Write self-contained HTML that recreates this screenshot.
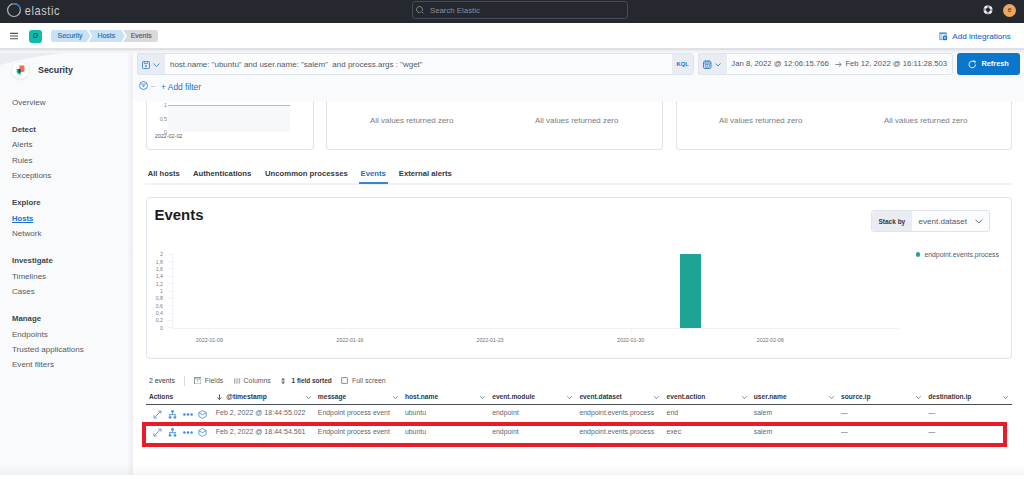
<!DOCTYPE html>
<html><head><meta charset="utf-8">
<style>
*{margin:0;padding:0;box-sizing:border-box}
html,body{width:1024px;height:479px;overflow:hidden;background:#fff;font-family:"Liberation Sans",sans-serif;color:#343741}
.a{position:absolute;white-space:nowrap}
.t{position:absolute;white-space:nowrap;line-height:12px;height:12px}
</style></head><body>
<div class="a" style="left:0px;top:0px;width:1024px;height:23px;background:#25282f"></div>
<svg class="a" style="left:6px;top:3px" width="16" height="16" viewBox="0 0 16 16">
  <circle cx="8" cy="7.1" r="6.4" fill="none" stroke="#b4b7bd" stroke-width="1.2"/>
  <path d="M6.34 0.92 A6.4 6.4 0 0 1 14.38 6.54" fill="none" stroke="#1f78c8" stroke-width="1.3"/>
</svg>
<div class="t" style="left:24.8px;top:4px;font-size:11px;line-height:14px;height:14px;letter-spacing:0.57px;color:#c9cbd0;transform:scaleY(1.22);transform-origin:0 11.1px">elastic</div>
<div class="a" style="left:412px;top:1px;width:216px;height:17.6px;border:1px solid #484c56;border-radius:3px;background:#25282f"></div>
<svg class="a" style="left:416px;top:6px" width="8" height="8" viewBox="0 0 8 8"><path d="M6.2 4.8 A3 3 0 1 0 4.8 6.2" fill="none" stroke="#8e9199" stroke-width="0.9"/><path d="M5.4 5.4 L7.4 7.4" stroke="#8e9199" stroke-width="0.9"/></svg>
<div class="t" style="left:430px;top:4.90px;font-size:7.8px;color:#8d9098;">Search Elastic</div>
<svg class="a" style="left:982px;top:4px" width="12" height="12" viewBox="0 0 12 12"><circle cx="6" cy="5.8" r="3.4" fill="none" stroke="#a7a9af" stroke-width="2.4"/><circle cx="6" cy="5.8" r="3.4" fill="none" stroke="#f2f3f5" stroke-width="2.4" stroke-dasharray="2.4 2.94" stroke-dashoffset="-1.47"/></svg>
<div class="a" style="left:1002.8px;top:3.5px;width:13.4px;height:13.4px;border-radius:50%;background:#f1a45a"></div>
<div class="t" style="left:1003px;top:2.9px;width:13px;font-size:6.6px;line-height:13px;height:13px;text-align:center;color:#3a2e22">e</div>
<div class="a" style="left:0px;top:23px;width:1024px;height:25px;background:#fff"></div>
<div class="a" style="left:0px;top:48px;width:1024px;height:1px;background:#e0e1e6"></div>
<div class="a" style="left:0px;top:49px;width:1024px;height:1px;background:#dfe0e5"></div>
<svg class="a" style="left:9px;top:31px" width="10" height="10" viewBox="0 0 10 10"><path d="M1 2.4 H9 M1 5 H9 M1 7.7 H9" stroke="#4a4f5a" stroke-width="1.1"/></svg>
<div class="a" style="left:29px;top:29.5px;width:13px;height:13px;border-radius:3px;background:#0fbcab"></div>
<div class="t" style="left:29px;top:29.3px;width:13px;font-size:7px;line-height:13px;height:13px;text-align:center;color:#1a1c21">D</div>
<svg class="a" style="left:51px;top:30px" width="108" height="12" viewBox="0 0 108 12">
  <path d="M2 0 H35.5 L39.5 6 L35.5 12 H2 Q0 12 0 10 V2 Q0 0 2 0Z" fill="#c9e1f4"/>
  <path d="M37.5 0 H70 L74 6 L70 12 H37.5 L41.5 6Z" fill="#c9e1f4"/>
  <path d="M72 0 H105 Q107 0 107 2 V10 Q107 12 105 12 H72 L76 6Z" fill="#d9dadd"/>
</svg>
<div class="t" style="left:57.5px;top:29.90px;font-size:6.95px;color:#1f6cb5;-webkit-text-stroke:0.15px #1f6cb5">Security</div>
<div class="t" style="left:97.5px;top:29.90px;font-size:6.95px;color:#1f6cb5;-webkit-text-stroke:0.15px #1f6cb5">Hosts</div>
<div class="t" style="left:130.8px;top:29.90px;font-size:6.85px;color:#535966;-webkit-text-stroke:0.15px #535966">Events</div>
<svg class="a" style="left:938.5px;top:31.5px" width="10" height="10" viewBox="0 0 10 10"><rect x="0.8" y="0.8" width="6.4" height="6.9" fill="#e3eef9" stroke="#4a90da" stroke-width="0.8"/><path d="M0.8 1.6 H7.2" stroke="#4a90da" stroke-width="1"/><path d="M2.5 2.3 V7.7" stroke="#8cb8e6" stroke-width="0.6"/><circle cx="6" cy="5.9" r="2.3" fill="#0f6fcf"/><path d="M6 4.8 V7 M4.9 5.9 H7.1" stroke="#fff" stroke-width="0.7"/></svg>
<div class="t" style="left:952.3px;top:31.10px;font-size:8.1px;color:#1a6fcf;-webkit-text-stroke:0.12px #1a6fcf">Add integrations</div>
<div class="a" style="left:0px;top:50px;width:132px;height:425px;background:#f9fafc"></div>
<div class="a" style="left:127px;top:50px;width:6px;height:425px;background:linear-gradient(to right,rgba(40,50,80,0),rgba(40,50,80,.07))"></div>
<svg class="a" style="left:0;top:50px" width="132" height="30" viewBox="0 0 132 30"><path d="M0 0 H132 Q50 0 0 15Z" fill="#e9ecf2"/></svg>
<div class="a" style="left:12px;top:61.7px;width:17px;height:17px;border-radius:50%;background:#fff;box-shadow:0 0.5px 2px rgba(0,0,0,.16)"></div>
<svg class="a" style="left:16px;top:65px" width="10" height="10" viewBox="0 0 10 10"><path d="M3.4 0.4 H8.4 V5.5 Q8.4 6.4 7.6 6.8 L4.6 7.6 V3.9 H3.4Z" fill="#f86b4f"/><path d="M0.6 3.9 H4.6 V9.9 L2.2 8.9 Q0.6 8.2 0.6 6.8Z" fill="#1fb8a6"/><path d="M2.5 3.9 H4.6 V7.8 L2.5 7.4Z" fill="#2b3a45"/></svg>
<div class="t" style="left:38px;top:63.60px;font-size:8.87px;color:#343741;font-weight:bold;">Security</div>
<div class="t" style="left:12px;top:96.50px;font-size:8.05px;color:#555a64;">Overview</div>
<div class="t" style="left:12px;top:123.60px;font-size:7.8px;color:#41454e;font-weight:bold;">Detect</div>
<div class="t" style="left:12px;top:139.30px;font-size:8.05px;color:#555a64;">Alerts</div>
<div class="t" style="left:12px;top:154.50px;font-size:8.05px;color:#555a64;">Rules</div>
<div class="t" style="left:12px;top:169.50px;font-size:8.05px;color:#555a64;">Exceptions</div>
<div class="t" style="left:12px;top:196.90px;font-size:7.8px;color:#41454e;font-weight:bold;">Explore</div>
<div class="t" style="left:12px;top:213.00px;font-size:7.7px;color:#1a6fcf;font-weight:bold;text-decoration:underline">Hosts</div>
<div class="t" style="left:12px;top:227.90px;font-size:8.05px;color:#555a64;">Network</div>
<div class="t" style="left:12px;top:255.20px;font-size:7.8px;color:#41454e;font-weight:bold;">Investigate</div>
<div class="t" style="left:12px;top:271.00px;font-size:8.05px;color:#555a64;">Timelines</div>
<div class="t" style="left:12px;top:285.90px;font-size:8.05px;color:#555a64;">Cases</div>
<div class="t" style="left:12px;top:313.10px;font-size:7.8px;color:#41454e;font-weight:bold;">Manage</div>
<div class="t" style="left:12px;top:329.40px;font-size:8.05px;color:#555a64;">Endpoints</div>
<div class="t" style="left:12px;top:344.30px;font-size:8.05px;color:#555a64;">Trusted applications</div>
<div class="t" style="left:12px;top:359.30px;font-size:8.05px;color:#555a64;">Event filters</div>
<div class="a" style="left:133px;top:50px;width:891px;height:51px;background:#f9fafc"></div>
<div class="a" style="left:133px;top:101px;width:891px;height:374px;background:#fff"></div>
<div class="a" style="left:0px;top:475px;width:1024px;height:4px;background:#fff"></div>
<div class="a" style="left:0px;top:464px;width:1024px;height:11px;background:linear-gradient(to bottom,rgba(40,50,80,0),rgba(40,50,80,.045))"></div>
<div class="a" style="left:0px;top:50px;width:1024px;height:1px;background:#ecedf1"></div>
<div class="a" style="left:0px;top:51px;width:1024px;height:1px;background:#f1f2f5"></div>
<div class="a" style="left:0px;top:52px;width:1024px;height:1px;background:#f4f5f8"></div>
<div class="a" style="left:146px;top:101px;width:168px;height:49px;border:1px solid #dfe3eb;border-top:none;border-radius:0 0 4px 4px;background:#fff"></div>
<div class="a" style="left:326px;top:101px;width:337px;height:49px;border:1px solid #dfe3eb;border-top:none;border-radius:0 0 4px 4px;background:#fff"></div>
<div class="a" style="left:676px;top:101px;width:336px;height:49px;border:1px solid #dfe3eb;border-top:none;border-radius:0 0 4px 4px;background:#fff"></div>
<div class="a" style="left:168px;top:105px;width:122px;height:27px;background:#f6f8fb"></div>
<div class="a" style="left:168px;top:105px;width:122px;height:1px;background:#a3c0de"></div>
<div class="t" style="left:151.5px;top:99.2px;width:15.5px;text-align:right;font-size:5.3px;color:#80858e">1</div>
<div class="t" style="left:151.5px;top:112.5px;width:15.5px;text-align:right;font-size:5.3px;color:#80858e">0,5</div>
<div class="t" style="left:151.5px;top:125.5px;width:15.5px;text-align:right;font-size:5.3px;color:#80858e">0</div>
<div class="t" style="left:154.8px;top:129.80px;font-size:5.4px;color:#535966;">2022-02-02</div>
<div class="t" style="left:370px;top:114.90px;font-size:7.95px;color:#767b84;">All values returned zero</div>
<div class="t" style="left:535px;top:114.90px;font-size:7.95px;color:#767b84;">All values returned zero</div>
<div class="t" style="left:719px;top:114.90px;font-size:7.95px;color:#767b84;">All values returned zero</div>
<div class="t" style="left:884px;top:114.90px;font-size:7.95px;color:#767b84;">All values returned zero</div>
<div class="t" style="left:147.8px;top:168.30px;font-size:7.56px;color:#343741;font-weight:bold;">All hosts</div>
<div class="t" style="left:193px;top:168.30px;font-size:7.72px;color:#343741;font-weight:bold;">Authentications</div>
<div class="t" style="left:265px;top:168.30px;font-size:7.72px;color:#343741;font-weight:bold;">Uncommon processes</div>
<div class="t" style="left:360.6px;top:168.30px;font-size:7.72px;color:#1a6fcf;font-weight:bold;">Events</div>
<div class="t" style="left:398.8px;top:168.30px;font-size:7.7px;color:#343741;font-weight:bold;">External alerts</div>
<div class="a" style="left:145px;top:183px;width:867px;height:1.8px;background:#eff2f6"></div>
<div class="a" style="left:359px;top:182px;width:29px;height:2px;background:#3486d6"></div>
<div class="a" style="left:146px;top:197px;width:866px;height:162px;border:1px solid #dfe3eb;border-radius:4px;background:#fff"></div>
<div class="t" style="left:154.5px;top:207.8px;font-size:14.95px;line-height:14px;height:14px;font-weight:bold;color:#1a1c21">Events</div>
<div class="a" style="left:871px;top:210px;width:119px;height:22px;border:1px solid #dfe3eb;border-radius:3px;background:#fbfcfd"></div>
<div class="a" style="left:872px;top:211px;width:40px;height:20px;background:#e9edf3;border-radius:2px 0 0 2px"></div>
<div class="t" style="left:878.4px;top:215.60px;font-size:6.54px;color:#343741;font-weight:bold;">Stack by</div>
<div class="t" style="left:918.6px;top:216.00px;font-size:8.06px;color:#535966;">event.dataset</div>
<svg class="a" style="left:974.5px;top:219px" width="8" height="5" viewBox="0 0 8 5"><path d="M0.5 0.7 L3.8 4 L7.1 0.7" fill="none" stroke="#535966" stroke-width="0.9"/></svg>
<div class="a" style="left:915.6px;top:252.2px;width:4.4px;height:4.4px;border-radius:50%;background:#1ea494"></div>
<div class="t" style="left:924.4px;top:248.60px;font-size:6.88px;color:#535966;">endpoint.events.process</div>
<div class="t" style="left:145px;top:248.20px;width:18px;text-align:right;font-size:5.3px;color:#7d828c">2</div>
<div class="a" style="left:168px;top:253.70px;width:4px;height:1px;background:#f0f1f3"></div>
<div class="t" style="left:145px;top:255.56px;width:18px;text-align:right;font-size:5.3px;color:#7d828c">1,8</div>
<div class="a" style="left:168px;top:261.06px;width:4px;height:1px;background:#f0f1f3"></div>
<div class="t" style="left:145px;top:262.92px;width:18px;text-align:right;font-size:5.3px;color:#7d828c">1,6</div>
<div class="a" style="left:168px;top:268.42px;width:4px;height:1px;background:#f0f1f3"></div>
<div class="t" style="left:145px;top:270.28px;width:18px;text-align:right;font-size:5.3px;color:#7d828c">1,4</div>
<div class="a" style="left:168px;top:275.78px;width:4px;height:1px;background:#f0f1f3"></div>
<div class="t" style="left:145px;top:277.64px;width:18px;text-align:right;font-size:5.3px;color:#7d828c">1,2</div>
<div class="a" style="left:168px;top:283.14px;width:4px;height:1px;background:#f0f1f3"></div>
<div class="t" style="left:145px;top:285.00px;width:18px;text-align:right;font-size:5.3px;color:#7d828c">1</div>
<div class="a" style="left:168px;top:290.50px;width:4px;height:1px;background:#f0f1f3"></div>
<div class="t" style="left:145px;top:292.36px;width:18px;text-align:right;font-size:5.3px;color:#7d828c">0,8</div>
<div class="a" style="left:168px;top:297.86px;width:4px;height:1px;background:#f0f1f3"></div>
<div class="t" style="left:145px;top:299.72px;width:18px;text-align:right;font-size:5.3px;color:#7d828c">0,6</div>
<div class="a" style="left:168px;top:305.22px;width:4px;height:1px;background:#f0f1f3"></div>
<div class="t" style="left:145px;top:307.08px;width:18px;text-align:right;font-size:5.3px;color:#7d828c">0,4</div>
<div class="a" style="left:168px;top:312.58px;width:4px;height:1px;background:#f0f1f3"></div>
<div class="t" style="left:145px;top:314.44px;width:18px;text-align:right;font-size:5.3px;color:#7d828c">0,2</div>
<div class="a" style="left:168px;top:319.94px;width:4px;height:1px;background:#f0f1f3"></div>
<div class="t" style="left:145px;top:321.80px;width:18px;text-align:right;font-size:5.3px;color:#7d828c">0</div>
<div class="a" style="left:168px;top:327.30px;width:4px;height:1px;background:#f0f1f3"></div>
<div class="a" style="left:172px;top:254px;width:1px;height:75px;background:#f0f1f3"></div>
<div class="a" style="left:172px;top:328px;width:727px;height:1px;background:#f0f1f3"></div>
<div class="a" style="left:209.4px;top:328px;width:1px;height:5px;background:#f0f1f3"></div>
<div class="t" style="left:179.4px;top:334px;width:60px;text-align:center;font-size:5.3px;color:#6a6f79">2022-01-09</div>
<div class="a" style="left:350.0px;top:328px;width:1px;height:5px;background:#f0f1f3"></div>
<div class="t" style="left:320.0px;top:334px;width:60px;text-align:center;font-size:5.3px;color:#6a6f79">2022-01-16</div>
<div class="a" style="left:490.0px;top:328px;width:1px;height:5px;background:#f0f1f3"></div>
<div class="t" style="left:460.0px;top:334px;width:60px;text-align:center;font-size:5.3px;color:#6a6f79">2022-01-23</div>
<div class="a" style="left:630.6px;top:328px;width:1px;height:5px;background:#f0f1f3"></div>
<div class="t" style="left:600.6px;top:334px;width:60px;text-align:center;font-size:5.3px;color:#6a6f79">2022-01-30</div>
<div class="a" style="left:770.3px;top:328px;width:1px;height:5px;background:#f0f1f3"></div>
<div class="t" style="left:740.3px;top:334px;width:60px;text-align:center;font-size:5.3px;color:#6a6f79">2022-02-06</div>
<div class="a" style="left:679.5px;top:254px;width:21px;height:74px;background:#1ea494"></div>
<div class="t" style="left:148.9px;top:374.50px;font-size:6.9px;color:#343741;">2 events</div>
<div class="a" style="left:184px;top:375.5px;width:1px;height:10px;background:#d3dae6"></div>
<svg class="a" style="left:193.8px;top:376.8px" width="7.5" height="7.5" viewBox="0 0 7.5 7.5"><rect x="0.5" y="0.5" width="6.5" height="6.5" fill="none" stroke="#7d828c" stroke-width="0.8"/><path d="M3.75 0.5 V4.8 M2.1 0.5 V2.8 M5.4 0.5 V2.8" stroke="#7d828c" stroke-width="0.7"/></svg>
<div class="t" style="left:204.8px;top:374.50px;font-size:6.9px;color:#535966;">Fields</div>
<svg class="a" style="left:233.5px;top:377.5px" width="6" height="6" viewBox="0 0 6 6"><path d="M0.7 0.3 V5.7 M3 0.3 V5.7 M5.3 0.3 V5.7" stroke="#9a9fa8" stroke-width="1"/><path d="M1.8 0.3 V5.7 M4.1 0.3 V5.7" stroke="#c9ccd2" stroke-width="0.6"/></svg>
<div class="t" style="left:243.6px;top:374.50px;font-size:6.9px;color:#535966;">Columns</div>
<svg class="a" style="left:281.3px;top:377.5px" width="4.2" height="6" viewBox="0 0 4.2 6"><path d="M2.1 0.6 V5.4 M0.5 2 L2.1 0.5 L3.7 2 M0.5 4 L2.1 5.5 L3.7 4" fill="none" stroke="#343741" stroke-width="0.8"/></svg>
<div class="t" style="left:291.6px;top:374.50px;font-size:6.44px;color:#343741;font-weight:bold;">1 field sorted</div>
<svg class="a" style="left:341.2px;top:377px" width="7" height="7" viewBox="0 0 7 7"><rect x="0.5" y="0.5" width="6" height="6" rx="0.6" fill="#e8eaee" stroke="#7d828c" stroke-width="0.8"/><rect x="1.8" y="1.8" width="3.4" height="3.4" fill="#fff"/></svg>
<div class="t" style="left:352px;top:374.50px;font-size:6.9px;color:#535966;">Full screen</div>
<div class="t" style="left:148.9px;top:390.60px;font-size:6.6px;color:#343741;font-weight:bold;">Actions</div>
<svg class="a" style="left:216.5px;top:394px" width="5" height="6" viewBox="0 0 5 6"><path d="M2.5 0.3 V5.4 M0.5 3.4 L2.5 5.4 L4.5 3.4" fill="none" stroke="#343741" stroke-width="0.8"/></svg>
<div class="t" style="left:226.3px;top:390.60px;font-size:6.8px;color:#343741;font-weight:bold;">@timestamp</div>
<div class="t" style="left:317.8px;top:390.60px;font-size:6.65px;color:#343741;font-weight:bold;">message</div>
<div class="t" style="left:404.9px;top:390.60px;font-size:6.65px;color:#343741;font-weight:bold;">host.name</div>
<div class="t" style="left:492.2px;top:390.60px;font-size:6.65px;color:#343741;font-weight:bold;">event.module</div>
<div class="t" style="left:579.4px;top:390.60px;font-size:6.65px;color:#343741;font-weight:bold;">event.dataset</div>
<div class="t" style="left:666.6px;top:390.60px;font-size:6.65px;color:#343741;font-weight:bold;">event.action</div>
<div class="t" style="left:753.8px;top:390.60px;font-size:6.65px;color:#343741;font-weight:bold;">user.name</div>
<div class="t" style="left:841.0px;top:390.60px;font-size:6.65px;color:#343741;font-weight:bold;">source.ip</div>
<div class="t" style="left:928.2px;top:390.60px;font-size:6.65px;color:#343741;font-weight:bold;">destination.ip</div>
<svg class="a" style="left:306.1px;top:395.5px" width="5" height="3" viewBox="0 0 5 3"><path d="M0.3 0.3 L2.5 2.6 L4.7 0.3" fill="none" stroke="#69707d" stroke-width="0.8"/></svg>
<svg class="a" style="left:393.1px;top:395.5px" width="5" height="3" viewBox="0 0 5 3"><path d="M0.3 0.3 L2.5 2.6 L4.7 0.3" fill="none" stroke="#69707d" stroke-width="0.8"/></svg>
<svg class="a" style="left:480.1px;top:395.5px" width="5" height="3" viewBox="0 0 5 3"><path d="M0.3 0.3 L2.5 2.6 L4.7 0.3" fill="none" stroke="#69707d" stroke-width="0.8"/></svg>
<svg class="a" style="left:567.1px;top:395.5px" width="5" height="3" viewBox="0 0 5 3"><path d="M0.3 0.3 L2.5 2.6 L4.7 0.3" fill="none" stroke="#69707d" stroke-width="0.8"/></svg>
<svg class="a" style="left:654.1px;top:395.5px" width="5" height="3" viewBox="0 0 5 3"><path d="M0.3 0.3 L2.5 2.6 L4.7 0.3" fill="none" stroke="#69707d" stroke-width="0.8"/></svg>
<svg class="a" style="left:741.5px;top:395.5px" width="5" height="3" viewBox="0 0 5 3"><path d="M0.3 0.3 L2.5 2.6 L4.7 0.3" fill="none" stroke="#69707d" stroke-width="0.8"/></svg>
<svg class="a" style="left:828.5px;top:395.5px" width="5" height="3" viewBox="0 0 5 3"><path d="M0.3 0.3 L2.5 2.6 L4.7 0.3" fill="none" stroke="#69707d" stroke-width="0.8"/></svg>
<svg class="a" style="left:915.5px;top:395.5px" width="5" height="3" viewBox="0 0 5 3"><path d="M0.3 0.3 L2.5 2.6 L4.7 0.3" fill="none" stroke="#69707d" stroke-width="0.8"/></svg>
<svg class="a" style="left:1003.0px;top:395.5px" width="5" height="3" viewBox="0 0 5 3"><path d="M0.3 0.3 L2.5 2.6 L4.7 0.3" fill="none" stroke="#69707d" stroke-width="0.8"/></svg>
<div class="a" style="left:146px;top:403.6px;width:866px;height:1.8px;background:#4a4e57"></div>
<svg class="a" style="left:153px;top:409.5px" width="9" height="9" viewBox="0 0 9 9"><path d="M1.2 7.8 L7.8 1.2 M5.2 1 H8 V3.8 M1 5.2 V8 H3.8" fill="none" stroke="#3f8ad8" stroke-width="0.8"/></svg>
<svg class="a" style="left:168px;top:409.5px" width="9" height="9" viewBox="0 0 9 9"><rect x="3.2" y="0.3" width="2.6" height="2.2" rx="0.6" fill="#3f8ad8"/><path d="M4.5 2.5 V4.6 M1 4.6 H8 M2 4.6 V6 M7 4.6 V6" stroke="#3f8ad8" stroke-width="0.8"/><rect x="0.7" y="6.2" width="2.7" height="2.3" rx="0.8" fill="#3f8ad8"/><rect x="5.6" y="6.2" width="2.7" height="2.3" rx="0.8" fill="#3f8ad8"/></svg>
<svg class="a" style="left:183px;top:412.5px" width="10" height="3" viewBox="0 0 10 3"><circle cx="1.4" cy="1.5" r="1.25" fill="#3f8ad8"/><circle cx="5" cy="1.5" r="1.25" fill="#3f8ad8"/><circle cx="8.6" cy="1.5" r="1.25" fill="#3f8ad8"/></svg>
<svg class="a" style="left:198px;top:409.5px" width="9" height="9" viewBox="0 0 9 9"><path d="M4.5 0.6 L8.2 2.6 V6.4 L4.5 8.4 L0.8 6.4 V2.6Z M0.8 2.6 L4.5 4.8 L8.2 2.6" fill="none" stroke="#3f8ad8" stroke-width="0.8"/></svg>
<div class="t" style="left:215.7px;top:407.20px;font-size:7.05px;color:#62666f;">Feb 2, 2022 @ 18:44:55.022</div>
<div class="t" style="left:317.8px;top:407.20px;font-size:6.9px;color:#62666f;">Endpoint process event</div>
<div class="t" style="left:404.9px;top:407.20px;font-size:6.9px;color:#62666f;">ubuntu</div>
<div class="t" style="left:492.2px;top:407.20px;font-size:6.9px;color:#62666f;">endpoint</div>
<div class="t" style="left:579.4px;top:407.20px;font-size:6.9px;color:#62666f;">endpoint.events.process</div>
<div class="t" style="left:666.6px;top:407.20px;font-size:6.9px;color:#62666f;">end</div>
<div class="t" style="left:753.8px;top:407.20px;font-size:6.9px;color:#62666f;">salem</div>
<div class="t" style="left:841.0px;top:407.20px;font-size:6.9px;color:#62666f;">—</div>
<div class="t" style="left:928.2px;top:407.20px;font-size:6.9px;color:#62666f;">—</div>
<svg class="a" style="left:153px;top:427.8px" width="9" height="9" viewBox="0 0 9 9"><path d="M1.2 7.8 L7.8 1.2 M5.2 1 H8 V3.8 M1 5.2 V8 H3.8" fill="none" stroke="#3f8ad8" stroke-width="0.8"/></svg>
<svg class="a" style="left:168px;top:427.8px" width="9" height="9" viewBox="0 0 9 9"><rect x="3.2" y="0.3" width="2.6" height="2.2" rx="0.6" fill="#3f8ad8"/><path d="M4.5 2.5 V4.6 M1 4.6 H8 M2 4.6 V6 M7 4.6 V6" stroke="#3f8ad8" stroke-width="0.8"/><rect x="0.7" y="6.2" width="2.7" height="2.3" rx="0.8" fill="#3f8ad8"/><rect x="5.6" y="6.2" width="2.7" height="2.3" rx="0.8" fill="#3f8ad8"/></svg>
<svg class="a" style="left:183px;top:430.8px" width="10" height="3" viewBox="0 0 10 3"><circle cx="1.4" cy="1.5" r="1.25" fill="#3f8ad8"/><circle cx="5" cy="1.5" r="1.25" fill="#3f8ad8"/><circle cx="8.6" cy="1.5" r="1.25" fill="#3f8ad8"/></svg>
<svg class="a" style="left:198px;top:427.8px" width="9" height="9" viewBox="0 0 9 9"><path d="M4.5 0.6 L8.2 2.6 V6.4 L4.5 8.4 L0.8 6.4 V2.6Z M0.8 2.6 L4.5 4.8 L8.2 2.6" fill="none" stroke="#3f8ad8" stroke-width="0.8"/></svg>
<div class="t" style="left:215.7px;top:425.50px;font-size:7.05px;color:#62666f;">Feb 2, 2022 @ 18:44:54.561</div>
<div class="t" style="left:317.8px;top:425.50px;font-size:6.9px;color:#62666f;">Endpoint process event</div>
<div class="t" style="left:404.9px;top:425.50px;font-size:6.9px;color:#62666f;">ubuntu</div>
<div class="t" style="left:492.2px;top:425.50px;font-size:6.9px;color:#62666f;">endpoint</div>
<div class="t" style="left:579.4px;top:425.50px;font-size:6.9px;color:#62666f;">endpoint.events.process</div>
<div class="t" style="left:666.6px;top:425.50px;font-size:6.9px;color:#62666f;">exec</div>
<div class="t" style="left:753.8px;top:425.50px;font-size:6.9px;color:#62666f;">salem</div>
<div class="t" style="left:841.0px;top:425.50px;font-size:6.9px;color:#62666f;">—</div>
<div class="t" style="left:928.2px;top:425.50px;font-size:6.9px;color:#62666f;">—</div>
<div class="a" style="left:142px;top:422px;width:865px;height:25px;border:4px solid #e81c26"></div>
<div class="a" style="left:137px;top:53px;width:557px;height:22px;border:1px solid #dfe3eb;border-radius:3px;background:#fbfcfd"></div>
<div class="a" style="left:137px;top:53px;width:28px;height:22px;border:1px solid #dfe3eb;border-right:none;border-radius:3px 0 0 3px;background:#e9edf3"></div>
<svg class="a" style="left:142px;top:60.5px" width="8" height="8" viewBox="0 0 8 8"><rect x="0.5" y="0.5" width="7" height="7" rx="0.8" fill="none" stroke="#3a84d4" stroke-width="0.9"/><path d="M2.3 0.5 V2.6 H5.7 V0.5" fill="none" stroke="#3a84d4" stroke-width="0.8"/><rect x="3.2" y="4.3" width="1.6" height="1.6" fill="#3a84d4"/></svg>
<svg class="a" style="left:153.3px;top:62.8px" width="7" height="5" viewBox="0 0 7 5"><path d="M0.5 0.6 L3.5 3.5 L6.5 0.6" fill="none" stroke="#3a84d4" stroke-width="0.9"/></svg>
<div class="t" style="left:170px;top:59.30px;font-size:7.98px;color:#535966;">host.name: "ubuntu" and user.name: "salem"&nbsp; and process.args : "wget"</div>
<div class="a" style="left:672px;top:54px;width:21px;height:20px;background:#e9edf3"></div>
<div class="t" style="left:676.6px;top:58.30px;font-size:5.73px;color:#1a6fcf;font-weight:bold;">KQL</div>
<div class="a" style="left:698px;top:53px;width:255px;height:22px;border:1px solid #dfe3eb;border-radius:3px;background:#fbfcfd"></div>
<div class="a" style="left:698px;top:53px;width:29px;height:22px;border:1px solid #dfe3eb;border-right:none;border-radius:3px 0 0 3px;background:#e9edf3"></div>
<svg class="a" style="left:703px;top:60px" width="8.5" height="9" viewBox="0 0 8.5 9"><rect x="0.5" y="1.2" width="7.5" height="7.3" rx="1.3" fill="none" stroke="#3a84d4" stroke-width="1"/><path d="M0.5 3 H8" stroke="#3a84d4" stroke-width="1"/><path d="M2.4 0 V1.8 M4.25 0 V1.8 M6.1 0 V1.8" stroke="#3a84d4" stroke-width="0.8"/><rect x="2.2" y="4.3" width="4.1" height="2.8" fill="none" stroke="#3a84d4" stroke-width="0.7"/><path d="M4.25 4.3 V7.1" stroke="#3a84d4" stroke-width="0.6"/></svg>
<svg class="a" style="left:715.2px;top:62.6px" width="6" height="3.5" viewBox="0 0 6 3.5"><path d="M0.4 0.5 L3 2.9 L5.6 0.5" fill="none" stroke="#3a84d4" stroke-width="0.9"/></svg>
<div class="t" style="left:731.3px;top:58.30px;font-size:7.73px;color:#535966;">Jan 8, 2022 @ 12:06:15.766</div>
<svg class="a" style="left:834.5px;top:62px" width="7" height="5" viewBox="0 0 7 5"><path d="M0.3 2.5 H6.2 M4 0.4 L6.2 2.5 L4 4.6" fill="none" stroke="#69707d" stroke-width="0.8"/></svg>
<div class="t" style="left:845.4px;top:58.30px;font-size:7.7px;color:#535966;">Feb 12, 2022 @ 16:11:28.503</div>
<div class="a" style="left:957px;top:53px;width:63px;height:22px;border-radius:3px;background:#0b77cc"></div>
<svg class="a" style="left:968px;top:59.5px" width="9" height="9" viewBox="0 0 9 9"><path d="M7.6 4.5 A3.3 3.3 0 1 1 6.2 1.8" fill="none" stroke="#fff" stroke-width="0.9"/><path d="M5.3 0.7 L7.3 1.3 L6.8 3.3" fill="none" stroke="#fff" stroke-width="0.9"/></svg>
<div class="t" style="left:981.4px;top:58.40px;font-size:7.39px;color:#fff;font-weight:bold;">Refresh</div>
<svg class="a" style="left:138.5px;top:81px" width="9" height="9" viewBox="0 0 9 9"><circle cx="4.5" cy="4.5" r="4" fill="none" stroke="#3a86d8" stroke-width="0.9"/><path d="M1.8 3 H7.2" stroke="#3a86d8" stroke-width="0.8"/><path d="M2.8 4.2 H6.2 L4.5 6.6Z" fill="#3a86d8" opacity="0.8"/></svg>
<div class="a" style="left:151px;top:86px;width:4px;height:1px;background:#c9ced8"></div>
<div class="t" style="left:161px;top:80.80px;font-size:8.42px;color:#1a6fcf;">+ Add filter</div>
</body></html>
